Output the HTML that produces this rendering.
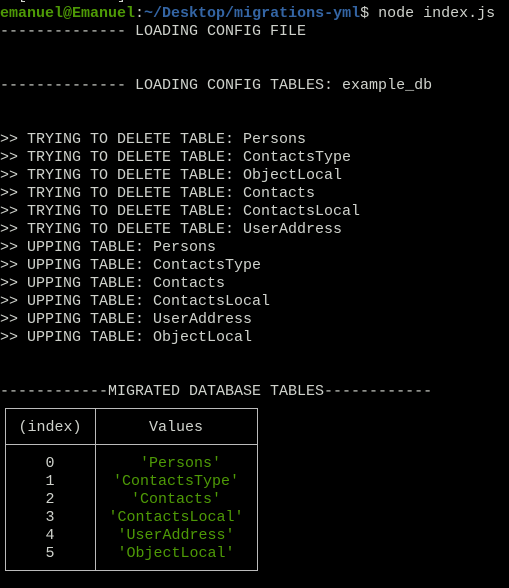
<!DOCTYPE html>
<html><head><meta charset="utf-8"><style>
body{margin:0;background:#000;width:509px;height:588px;overflow:hidden;position:relative;font-family:"Liberation Mono","DejaVu Sans Mono",monospace;font-size:15px;color:#cfd2cc}
pre{margin:0;position:absolute;left:0;top:-13px;font:inherit;line-height:18px;white-space:pre}
.g{color:#4e9a06;font-weight:bold}.b{color:#3465a4;font-weight:bold}
.box{position:absolute;left:5px;top:408px;width:253px;height:163px;border:1px solid #bbb;box-sizing:border-box}
.v{position:absolute;left:95px;top:408px;width:1px;height:163px;background:#bbb}
.h{position:absolute;left:5px;top:444px;width:253px;height:1px;background:#bbb}
.c{position:absolute;text-align:center;line-height:18px;white-space:pre}
.gr{color:#4e9a06}
</style></head><body>
<pre>  [          ]
<span class="g">emanuel@Emanuel</span>:<span class="b">~/Desktop/migrations-yml</span>$ node index.js
-------------- LOADING CONFIG FILE


-------------- LOADING CONFIG TABLES: example_db


&gt;&gt; TRYING TO DELETE TABLE: Persons
&gt;&gt; TRYING TO DELETE TABLE: ContactsType
&gt;&gt; TRYING TO DELETE TABLE: ObjectLocal
&gt;&gt; TRYING TO DELETE TABLE: Contacts
&gt;&gt; TRYING TO DELETE TABLE: ContactsLocal
&gt;&gt; TRYING TO DELETE TABLE: UserAddress
&gt;&gt; UPPING TABLE: Persons
&gt;&gt; UPPING TABLE: ContactsType
&gt;&gt; UPPING TABLE: Contacts
&gt;&gt; UPPING TABLE: ContactsLocal
&gt;&gt; UPPING TABLE: UserAddress
&gt;&gt; UPPING TABLE: ObjectLocal


------------MIGRATED DATABASE TABLES------------</pre>
<div class="box"></div><div class="v"></div><div class="h"></div>
<div class="c" style="left:5px;width:90px;top:419px">(index)</div>
<div class="c" style="left:96px;width:160px;top:419px">Values</div>
<div class="c" style="left:5px;width:90px;top:455px">0
1
2
3
4
5</div>
<div class="c gr" style="left:96px;width:160px;top:455px"> 'Persons'
'ContactsType'
'Contacts'
'ContactsLocal'
'UserAddress'
'ObjectLocal'</div>
</body></html>
